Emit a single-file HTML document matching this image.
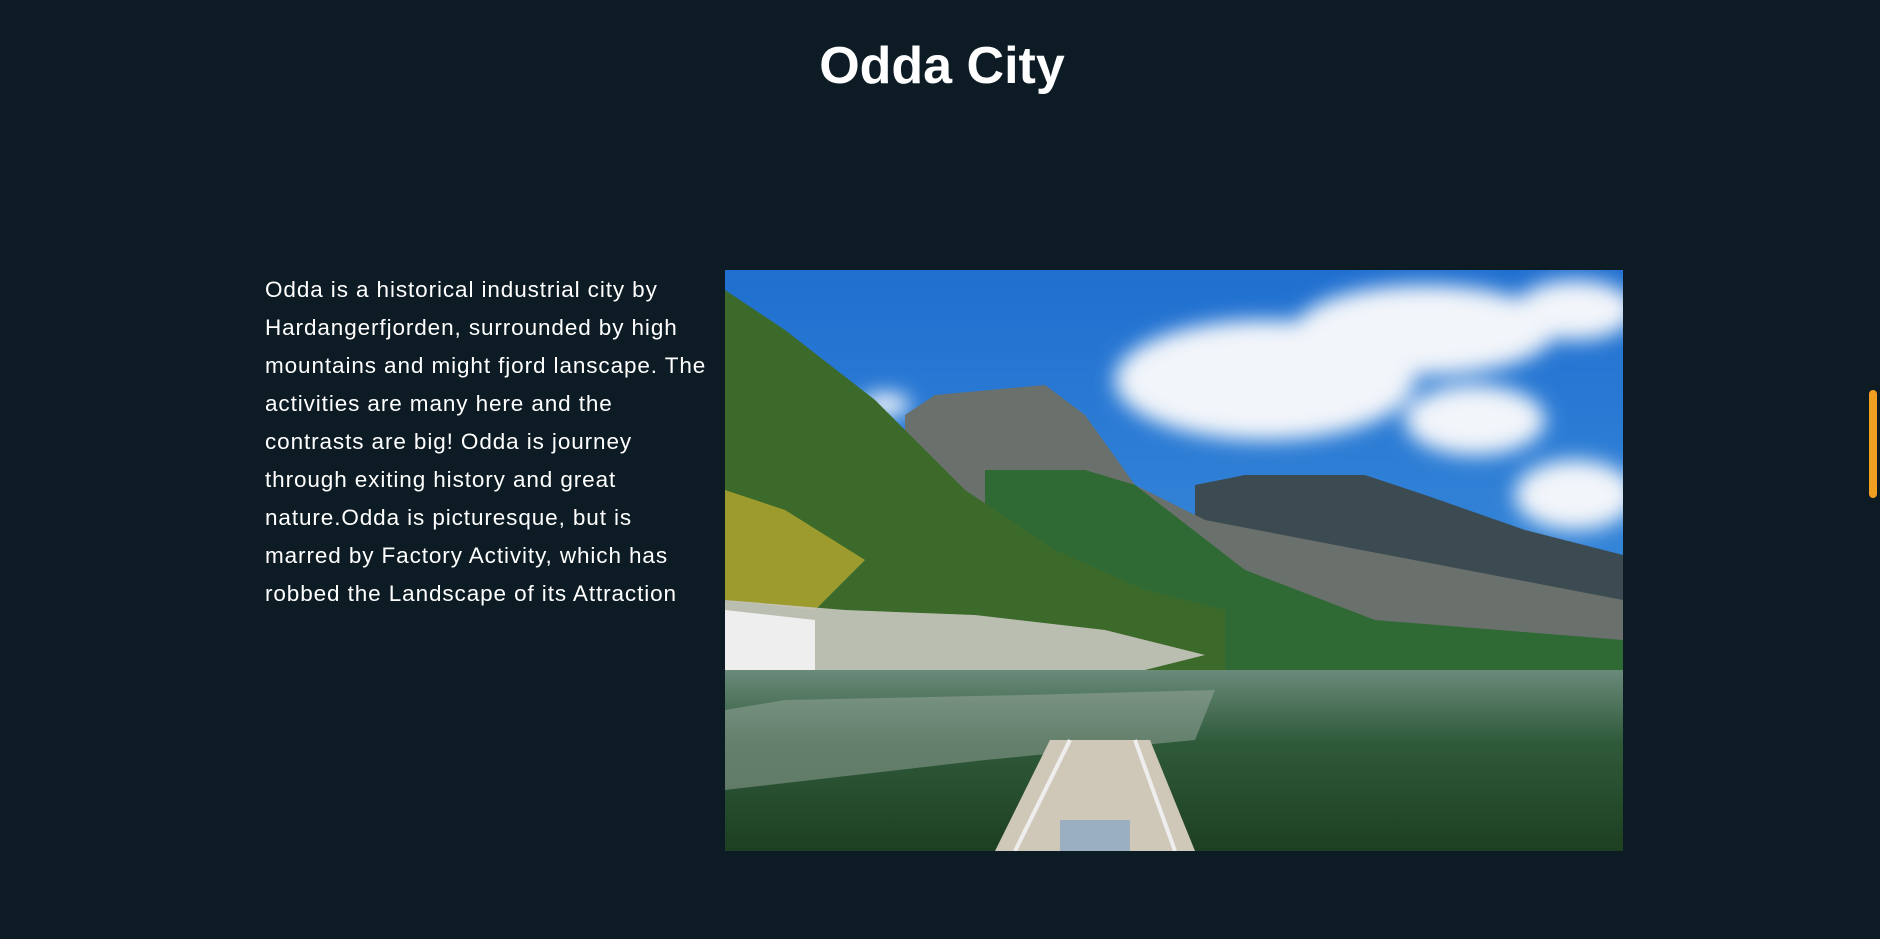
<!DOCTYPE html>
<html><head><meta charset="utf-8"><style>
html,body{margin:0;padding:0;background:#0d1b24;width:1880px;height:939px;overflow:hidden;font-family:"Liberation Sans",sans-serif;color:#fff}
h1{position:absolute;left:0;width:1884px;top:36px;margin:0;text-align:center;font-size:52px;font-weight:bold;line-height:60px}
.txt{position:absolute;left:265px;top:271px;font-size:22.5px;line-height:38px;white-space:nowrap;letter-spacing:0.9px;font-weight:300}
.img{position:absolute;left:725px;top:270px;width:898px;height:581px}
.sb{position:absolute;left:1869px;top:390px;width:8px;height:108px;background:#f0a020;border-radius:4px}
</style></head><body>
<h1>Odda City</h1>
<div class="txt">Odda is a historical industrial city by<br>Hardangerfjorden, surrounded by high<br>mountains and might fjord lanscape. The<br>activities are many here and the<br>contrasts are big! Odda is journey<br>through exiting history and great<br>nature.Odda is picturesque, but is<br>marred by Factory Activity, which has<br>robbed the Landscape of its Attraction</div>
<svg class="img" viewBox="0 0 898 581" preserveAspectRatio="none">
<defs>
<linearGradient id="sky" x1="0" y1="0" x2="0" y2="1"><stop offset="0" stop-color="#1f6fd0"/><stop offset="1" stop-color="#4a9be0"/></linearGradient>
<linearGradient id="wat" x1="0" y1="0" x2="0" y2="1"><stop offset="0" stop-color="#6a8a7a"/><stop offset="0.4" stop-color="#2f5a3a"/><stop offset="1" stop-color="#1d3f22"/></linearGradient>
<filter id="bl"><feGaussianBlur stdDeviation="10"/></filter>
</defs>
<rect width="898" height="581" fill="url(#sky)"/>
<g fill="#f2f5fa" filter="url(#bl)">
<ellipse cx="540" cy="110" rx="150" ry="60"/><ellipse cx="700" cy="60" rx="130" ry="45"/><ellipse cx="750" cy="150" rx="70" ry="35"/><ellipse cx="850" cy="225" rx="60" ry="35"/><ellipse cx="160" cy="135" rx="25" ry="12"/><ellipse cx="850" cy="40" rx="60" ry="30"/>
</g>
<path d="M470 215 L520 205 L640 205 L700 225 L800 260 L898 285 L898 400 L470 400Z" fill="#3c4a52"/>
<path d="M180 145 L210 125 L320 115 L360 145 L410 215 L480 250 L898 330 L898 400 L180 400Z" fill="#6a706c"/>
<path d="M260 200 L360 200 L410 215 L520 300 L650 350 L898 370 L898 410 L260 410Z" fill="#2f6a35"/>
<path d="M0 20 L60 60 L150 130 L240 220 L330 280 L420 320 L500 340 L500 400 L0 400Z" fill="#3c6a2a"/>
<path d="M0 220 L60 240 L140 290 L90 340 L0 330Z" fill="#b6a830" opacity=".8"/>
<path d="M0 330 L120 340 L250 345 L380 360 L480 385 L420 400 L0 400Z" fill="#c8c8c0" opacity=".9"/>
<path d="M0 340 L90 350 L90 420 L0 430Z" fill="#eee"/>
<path d="M0 415 L95 410 L90 428 L0 438Z" fill="#a44a2a"/>
<rect y="400" width="898" height="181" fill="url(#wat)"/>
<path d="M0 440 L60 430 L300 425 L490 420 L470 470 L260 490 L0 520Z" fill="#9aa8a0" opacity=".5"/>
<path d="M270 581 L325 470 L425 470 L470 581Z" fill="#cfc8b8"/>
<path d="M290 581 L345 470 M450 581 L410 470" stroke="#eee" stroke-width="4"/>
<rect x="335" y="550" width="70" height="31" fill="#9ab0c0"/>
</svg>
<div class="sb"></div>
</body></html>
